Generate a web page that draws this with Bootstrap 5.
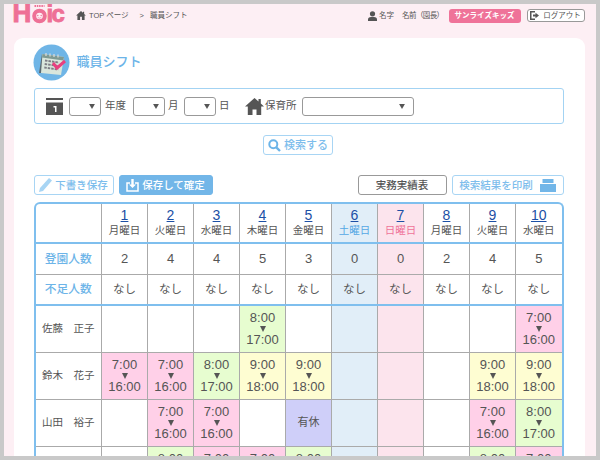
<!DOCTYPE html>
<html lang="ja">
<head>
<meta charset="utf-8">
<title>職員シフト</title>
<link rel="stylesheet" href="https://cdn.jsdelivr.net/npm/bootstrap@5.3.0/dist/css/bootstrap.min.css">
<style>
html,body{margin:0;height:460px;overflow:hidden}
body{font-family:"Liberation Sans","Noto Sans CJK JP",sans-serif;color:#555;background:#c9c9c9;font-size:11px}
.frame{width:600px;height:460px;border:4px solid #c9c9c9;background:#fdeff4;overflow:hidden;padding:0 11.5px 0 10px}
.topbar{height:34px;padding-bottom:11px;font-size:7.5px;color:#555}
.logo-svg{width:53px;height:19px;margin-left:-1px;display:block;align-self:flex-start;flex-shrink:0;overflow:visible}
.logo-txt{font-family:"Liberation Sans",sans-serif;font-weight:700;fill:#ee7096;stroke:#ee7096;stroke-width:.9}
.logo-ic{letter-spacing:-1.700px}
.crumbs{margin-left:10px;gap:3px}
.crumb-sep{margin:0 3px 0 8px}
.squeeze{letter-spacing:-.6px}
.school{background:#ef7399;color:#fff;font-weight:700;font-size:7.5px;width:72px;height:14px;border-radius:3px;margin-left:5px;white-space:nowrap}
.logout{width:58px;height:13px;border:1px solid #999;border-radius:3px;background:#fff;font-size:7.5px;margin-left:6px;color:#555;white-space:nowrap}
.sheet{background:#fff;border-radius:9px 9px 0 0;height:500px;padding:6px 21px 0 19.5px}
.title-row{height:37px;margin-bottom:7px}
.round-icon{width:37px;height:37px;display:block;margin-left:-1px}
.page-title{font-size:13px;color:#6cb4e8;font-weight:500;margin-left:7px;margin-top:-1px}
.search-box{height:36px;border:1px solid #a3d3f3;border-radius:3px;padding-left:11.5px;font-size:10.5px;color:#555}
.form-select.pick{width:32px;height:19px;flex-shrink:0;padding:0;border:1px solid #999;border-radius:3px;background-color:#fff;background-size:6px 5px;background-position:right 5px center;background-image:url("data:image/svg+xml,%3Csvg xmlns='http://www.w3.org/2000/svg' viewBox='0 0 7 6'%3E%3Cpath d='M0 0h7L3.500 6z' fill='%23555'/%3E%3C/svg%3E")}
.form-select.pick.wide{width:112px;margin-left:5.5px;background-position:right 8px center}
.pick-first{margin-left:6px}
.lbl-year{margin:0 7px 0 4px}
.lbl-month{margin:0 5.500px 0 3px}
.lbl-day{margin:0 15.500px 0 3px}
.lbl-place{margin-left:1px}
.search-wrap{margin:11px 0 20px;height:20px}
.tool{height:20px;border-radius:3px;font-size:10.5px;font-weight:500;padding:0;display:flex;align-items:center;justify-content:center;gap:3px;line-height:1}
.tool-outline{border:1px solid #a8d5f4;background:#fff;color:#7dbdec}
.tool-solid{border:1px solid #72b6e8;background:#72b6e8;color:#fff}
.tool-gray{border:1px solid #999;background:#fff;color:#555}
.w-search{width:70px;font-size:11px;margin-left:-1px}.w-draft{width:80px}.w-save{width:94px;margin-left:5px}.w-report{width:89px}.w-print{width:112px;margin-left:5px}
.tools-row{height:20px;margin-bottom:7px}
.grid-wrap{border:2px solid #7fbfee;border-radius:6px 6px 0 0;border-bottom:0;overflow:hidden;width:530px}
table.shift-grid{table-layout:fixed;width:526px;margin:0;border-collapse:collapse;font-size:13px;color:#555;--bs-table-color:#555;line-height:1.05}
.shift-grid col.name-col{width:66px}
.shift-grid th,.shift-grid td{padding:0!important;border:1px solid #aaa;text-align:center;vertical-align:middle;font-weight:400}
.shift-grid tr>*:first-child{border-left:0}
.shift-grid tr>*:last-child{border-right:0}
.shift-grid tr:first-child>*{border-top:0}
.shift-grid .row-head>*{height:39px;font-size:10.500px;line-height:13px;padding-bottom:3px!important;border-bottom:2px solid #7fbfee}
.shift-grid .row-head a{display:block;font-size:14px;color:#1c4fa5;line-height:18px}
.shift-grid .row-count>*{height:31px}
.shift-grid .row-short>*{height:31px;border-bottom:2px solid #7fbfee;font-size:11.500px}
.shift-grid .row-count>td{border-top:0}
.shift-grid .row-staff>*{height:47px;font-size:13px;line-height:11px}
.shift-grid .row-short>.row-label,.shift-grid .row-label{color:#6cb4e8;font-size:11.750px;font-weight:500}
.shift-grid .row-staff>.row-name{font-size:10.500px;color:#555;line-height:1.2}
.shift-grid .sat{background:#e1eef8;--bs-table-bg:#e1eef8;color:#55a8e4}
.shift-grid .sun{background:#fce4ed;--bs-table-bg:#fce4ed;color:#ef7399}
.shift-grid .sat,.shift-grid .sun{--bs-table-color:inherit}
.shift-grid td.sat,.shift-grid td.sun{color:#555}
.shift-grid .s-pink{background:#ffd0e8}
.shift-grid .s-green{background:#e7fdd0}
.shift-grid .s-yellow{background:#fefdd2}
.shift-grid .row-staff>.s-off{background:#cfcff9;font-size:11px}
.tri{display:block;width:0;height:0;border-left:3.5px solid transparent;border-right:3.5px solid transparent;border-top:6px solid #555;margin:2.5px auto}
</style>
</head>
<body>
<div class="frame">
  <header class="topbar d-flex align-items-center">
    <svg class="logo-svg" viewBox="0 0 53 19" role="img" aria-label="Hoic">
      <text class="logo-txt" x="-.5" y="18.400" font-size="26">H</text>
      <circle cx="26.500" cy="12" r="5.300" fill="none" stroke="#ee7096" stroke-width="4"/>
      <circle cx="24.800" cy="11.500" r=".7" fill="#ee7096"/><circle cx="28.200" cy="11.500" r=".7" fill="#ee7096"/>
      <path d="M24.800 13.500q1.700 1.400 3.400 0" stroke="#ee7096" fill="none" stroke-width=".6"/>
      <path d="M21.500 2h10" stroke="#ee7096" stroke-width="2" stroke-dasharray="1.500 .8"/>
      <text class="logo-txt logo-ic" x="33.500" y="18.400" font-size="24">ic</text>
    </svg>
    <nav class="crumbs d-flex align-items-center">
      <svg width="10" height="9" viewBox="0 0 11 10"><path d="M5.500 0 0 5h1.500v5h3V6.500h2V10h3V5H11L9 3.200V.8H7.700v1.200z" fill="#555"/></svg>
      <span>TOP ページ</span><span class="crumb-sep">&gt;</span><span>職員シフト</span>
    </nav>
    <div class="ms-auto d-flex align-items-center">
      <svg width="9" height="10" viewBox="0 0 9 10" style="margin-right:2.500px"><circle cx="4.500" cy="2.800" r="2.600" fill="#555"/><path d="M0 10V8.300Q0 6.300 3 6h3q3 .3 3 2.300V10z" fill="#555"/></svg>
      <span style="margin-right:8px">名字</span><span class="squeeze">名前（園長）</span>
      <span class="school d-flex align-items-center justify-content-center">サンライズキッズ</span>
      <span class="logout d-flex align-items-center justify-content-center gap-1">
        <svg width="9" height="9" viewBox="0 0 9 9"><path d="M0 0h5v1.500H1.500v6H5V9H0z" fill="#555"/><path d="M3 3.500h2.500V1.800L9 4.500 5.500 7.200V5.500H3z" fill="#555"/></svg>ログアウト</span>
    </div>
  </header>

  <main class="sheet">
    <div class="title-row d-flex align-items-center">
      <svg class="round-icon" viewBox="0 0 37 37">
        <circle cx="18.500" cy="18.500" r="18" fill="#6fb5e6"/>
        <path d="M6 29 9 10l3 19z" fill="#5b6a70"/>
        <path d="M9.500 10 31 13l-3 18-20-2z" fill="#d9e6dc"/>
        <path d="M9.500 10 31 13l-.6 3.500L9 13.500z" fill="#7f9a93"/>
        <path d="M13 9v3M17 9.500v3M21 10v3M25 10.500v3" stroke="#dcdcdc" stroke-width="1.200"/>
        <path d="M12 16.500l14 2M11.700 20l14 2M11.300 23.500l14 2" stroke="#7d7d85" stroke-width="1.800" stroke-dasharray="2.500 1"/>
        <path d="M20 19l4 5 8-7" fill="none" stroke="#e9407f" stroke-width="3"/>
      </svg>
      <h1 class="page-title mb-0">職員シフト</h1>
    </div>

    <form class="search-box d-flex align-items-center">
      <svg width="17" height="17" viewBox="0 0 17 17" class="flex-shrink-0"><rect width="17" height="17" fill="#555"/><rect y="2" width="17" height="2.500" fill="#fff"/><path d="M7.500 8h3v6H9V9.500H7.500z" fill="#fff"/></svg>
      <select class="form-select pick pick-first" aria-label="年度"></select><span class="lbl-year">年度</span>
      <select class="form-select pick" aria-label="月"></select><span class="lbl-month">月</span>
      <select class="form-select pick" aria-label="日"></select><span class="lbl-day">日</span>
      <svg width="19" height="17" viewBox="0 0 19 17" class="flex-shrink-0"><path d="M9.500 0 0 8.500h2.800V17h4.700v-5.500h4V17h4.700V8.500H19l-3.200-2.900V1h-2.300v2.500z" fill="#555"/></svg>
      <span class="lbl-place">保育所</span>
      <select class="form-select pick wide" aria-label="保育所"></select>
    </form>

    <div class="search-wrap d-flex justify-content-center">
      <button type="button" class="btn tool tool-outline w-search">
        <svg width="13" height="13" viewBox="0 0 13 13"><circle cx="5.300" cy="5.300" r="4" fill="none" stroke="#6cb4e8" stroke-width="2"/><path d="M8.300 8.300 12 12" stroke="#6cb4e8" stroke-width="2.400"/></svg>検索する</button>
    </div>

    <div class="tools-row d-flex">
      <button type="button" class="btn tool tool-outline w-draft">
        <svg width="13" height="14" viewBox="0 0 13 14"><path d="M0 14l1-4L10 0l3 2.500L4 13z" fill="#a8d5f4"/></svg>下書き保存</button>
      <button type="button" class="btn tool tool-solid w-save">
        <svg width="13" height="13" viewBox="0 0 13 13"><path d="M4 4H1v8h11V4H9" fill="none" stroke="#fff" stroke-width="1.500"/><path d="M5.300 0h2.400v5.500H10L6.500 9 3 5.500h2.300z" fill="#fff"/></svg>保存して確定</button>
      <button type="button" class="btn tool tool-gray w-report ms-auto">実務実績表</button>
      <button type="button" class="btn tool tool-outline w-print">検索結果を印刷
        <svg width="16" height="13" viewBox="0 0 16 13" class="ms-1"><path d="M2.500 0h11v4h-11z" fill="#72b6e8"/><path d="M0 5h16v8H0z" fill="#72b6e8"/></svg></button>
    </div>

    <div class="grid-wrap">
      <table class="table shift-grid">
        <colgroup><col class="name-col"><col span="10"></colgroup>
        <tr class="row-head"><th></th>
          <th><a href="#">1</a>月曜日</th><th><a href="#">2</a>火曜日</th><th><a href="#">3</a>水曜日</th><th><a href="#">4</a>木曜日</th><th><a href="#">5</a>金曜日</th>
          <th class="sat"><a href="#">6</a>土曜日</th><th class="sun"><a href="#">7</a>日曜日</th>
          <th><a href="#">8</a>月曜日</th><th><a href="#">9</a>火曜日</th><th><a href="#">10</a>水曜日</th></tr>
        <tr class="row-count"><th class="row-label">登園人数</th><td>2</td><td>4</td><td>4</td><td>5</td><td>3</td><td class="sat">0</td><td class="sun">0</td><td>2</td><td>4</td><td>5</td></tr>
        <tr class="row-short"><th class="row-label">不足人数</th><td>なし</td><td>なし</td><td>なし</td><td>なし</td><td>なし</td><td class="sat">なし</td><td class="sun">なし</td><td>なし</td><td>なし</td><td>なし</td></tr>
        <tr class="row-staff"><th class="row-name">佐藤　正子</th><td></td><td></td><td></td><td class="s-green">8:00<i class="tri"></i>17:00</td><td></td><td class="sat"></td><td class="sun"></td><td></td><td></td><td class="s-pink">7:00<i class="tri"></i>16:00</td></tr>
        <tr class="row-staff"><th class="row-name">鈴木　花子</th><td class="s-pink">7:00<i class="tri"></i>16:00</td><td class="s-pink">7:00<i class="tri"></i>16:00</td><td class="s-green">8:00<i class="tri"></i>17:00</td><td class="s-yellow">9:00<i class="tri"></i>18:00</td><td class="s-yellow">9:00<i class="tri"></i>18:00</td><td class="sat"></td><td class="sun"></td><td></td><td class="s-yellow">9:00<i class="tri"></i>18:00</td><td class="s-yellow">9:00<i class="tri"></i>18:00</td></tr>
        <tr class="row-staff"><th class="row-name">山田　裕子</th><td></td><td class="s-pink">7:00<i class="tri"></i>16:00</td><td class="s-pink">7:00<i class="tri"></i>16:00</td><td></td><td class="s-off">有休</td><td class="sat"></td><td class="sun"></td><td></td><td class="s-pink">7:00<i class="tri"></i>16:00</td><td class="s-green">8:00<i class="tri"></i>17:00</td></tr>
        <tr class="row-staff"><th class="row-name"></th><td></td><td class="s-green">8:00<i class="tri"></i>17:00</td><td class="s-pink">7:00<i class="tri"></i>16:00</td><td class="s-pink">7:00<i class="tri"></i>16:00</td><td class="s-green">8:00<i class="tri"></i>17:00</td><td class="sat"></td><td class="sun"></td><td></td><td class="s-green">8:00<i class="tri"></i>17:00</td><td class="s-pink">7:00<i class="tri"></i>16:00</td></tr>
      </table>
    </div>
  </main>
</div>
<script src="https://cdn.jsdelivr.net/npm/bootstrap@5.3.0/dist/js/bootstrap.bundle.min.js"></script>
</body>
</html>
